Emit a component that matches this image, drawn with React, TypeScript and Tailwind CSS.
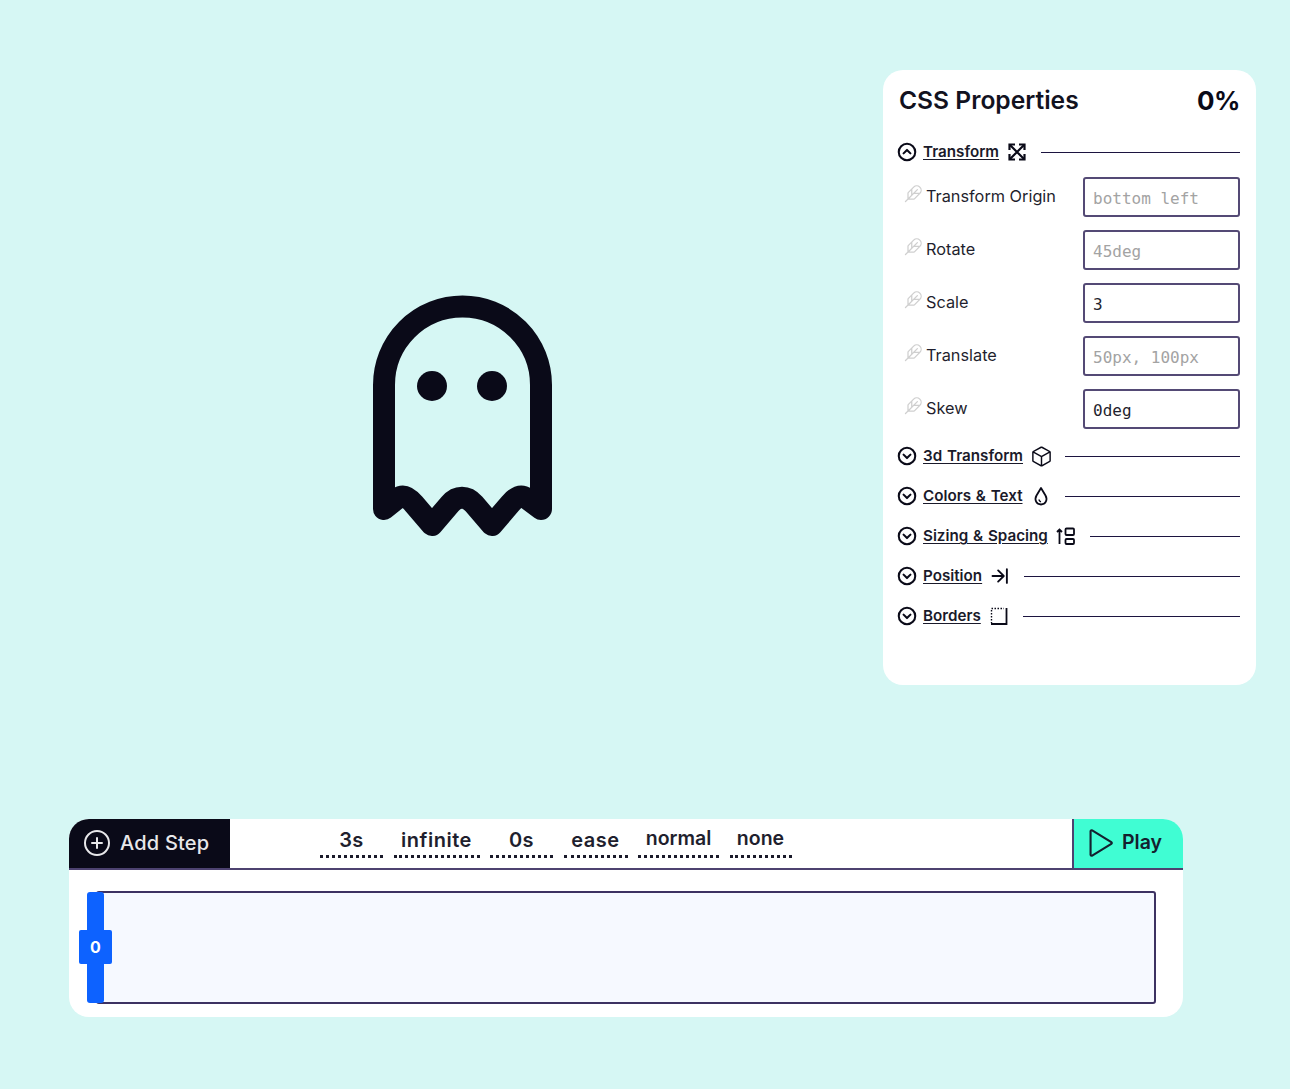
import type { ReactNode } from 'react';
import {
  PiArrowLineRightBold,
  PiCaretCircleDownBold,
  PiCaretCircleUpBold,
  PiCube,
  PiFeather,
  PiPlay,
  PiPlusCircle,
} from 'react-icons/pi';

const fields = [
  { label: 'Transform Origin', placeholder: 'bottom left' },
  { label: 'Rotate', placeholder: '45deg' },
  { label: 'Scale', value: '3' },
  { label: 'Translate', placeholder: '50px, 100px' },
  { label: 'Skew', value: '0deg' },
];

const params = [
  { text: '3s', width: 'w-[63px]', up: false },
  { text: 'infinite', width: 'w-[86px]', up: false },
  { text: '0s', width: 'w-[63px]', up: false },
  { text: 'ease', width: 'w-[64px]', up: false },
  { text: 'normal', width: 'w-[81px]', up: true },
  { text: 'none', width: 'w-[62px]', up: true },
];

function Ghost() {
  return (
    <svg width="200" height="260" viewBox="0 0 200 260" fill="none" stroke="#0a0a18" strokeWidth="22" strokeLinejoin="round">
      <path d="M22 223V99A78.5 78.5 0 0 1 179 99V223L165 212.5C158 208 153 212 148 218L130 239L112 218C105 209.500 95 209.500 88 218L70 239L52 218C47 212 42 208 35 212.500Z" />
      <circle cx="70" cy="100" r="15" fill="#0a0a18" stroke="none" />
      <circle cx="130" cy="100" r="15" fill="#0a0a18" stroke="none" />
    </svg>
  );
}

function ExpandIcon() {
  return (
    <svg width="20" height="20" viewBox="0 0 20 20" fill="none" stroke="#0a0a18" strokeWidth="2.2" className="shrink-0">
      <path d="M3 3L17 17M17 3L3 17" />
      <path d="M2.500 8V2.500H8M12 2.500H17.500V8M17.500 12V17.500H12M8 17.500H2.500V12" />
    </svg>
  );
}

function DropIcon() {
  return (
    <svg width="20" height="20" viewBox="0 0 20 20" fill="none" stroke="#0a0a18" strokeWidth="1.8" className="shrink-0">
      <path d="M10 2L14.500 9.500C17 14 14.500 18.500 10 18.500C5.500 18.500 3 14 5.500 9.500Z" strokeLinejoin="round" />
      <path d="M7.800 13.500C8.200 14.800 9 15.600 10 15.900" strokeWidth="1.3" />
    </svg>
  );
}

function SizingIcon() {
  return (
    <svg width="20" height="20" viewBox="0 0 20 20" fill="none" stroke="#0a0a18" strokeWidth="1.8">
      <path d="M3.500 18V3M1 6l2.500-2.500L6 6" />
      <rect x="9.500" y="2.500" width="8.500" height="6.500" rx="1" />
      <rect x="9.500" y="13" width="8.500" height="5" rx="1" />
    </svg>
  );
}

function BordersIcon() {
  return (
    <svg width="20" height="20" viewBox="0 0 20 20" fill="none" stroke="#0a0a18">
      <path d="M2.500 2.500H15" strokeWidth="1.4" strokeDasharray="1.5 1.5" />
      <path d="M2.500 4V17" strokeWidth="1.4" strokeDasharray="1.5 1.5" />
      <path d="M17.500 2V18H2" strokeWidth="1.8" />
    </svg>
  );
}

function SectionHeader({ title, icon, open }: { title: string; icon: ReactNode; open?: boolean }) {
  return (
    <div className="flex h-10 items-center">
      {open ? <PiCaretCircleUpBold size={22} className="text-[#0a0a18]" /> : <PiCaretCircleDownBold size={22} className="text-[#0a0a18]" />}
      <span className="ml-[5px] text-[15.2px] font-semibold leading-none text-[#1a1a2a] underline underline-offset-2 [word-spacing:1px]">
        {title}
      </span>
      <span className="ml-2 flex w-5 items-center justify-center">{icon}</span>
      <div className="ml-[14px] h-px flex-1 bg-[#1c1440]" />
    </div>
  );
}

function Field({ label, placeholder, value }: { label: string; placeholder?: string; value?: string }) {
  return (
    <div className="flex h-10 items-start">
      <PiFeather size={20} className="ml-[7px] mt-[7px] text-[#cfcfcf]" />
      <span className="ml-[3px] mt-[8px] flex-1 text-[16.3px] leading-[22px] text-[#1f1f2e]">{label}</span>
      <div
        className={`flex h-10 w-[157px] items-center rounded-[3px] border-2 border-[#544a75] bg-white pl-[8px] pt-[3px] font-['DejaVu_Sans_Mono',monospace] text-base ${
          value ? 'text-[#1f1f2e]' : 'text-[#a3a3a3]'
        }`}
      >
        {value ?? placeholder}
      </div>
    </div>
  );
}

function Timeline() {
  return (
    <div className="relative ml-[69px] mt-[134px] h-[198px] w-[1114px] overflow-hidden rounded-[20px] bg-white">
      <div className="flex h-[51px] border-b-2 border-[#4d4270]">
        <div className="flex w-[161px] items-center bg-[#0a0a18] pb-[2px] pl-[12px] text-[#e8e8ea]">
          <PiPlusCircle size={32} />
          <span className="ml-[7px] text-xl font-medium tracking-[0.2px]">Add Step</span>
        </div>
        <div className="ml-[90px] flex flex-1 items-start gap-[10.5px]">
          {params.map(p => (
            <div
              key={p.text}
              className={`flex h-[39px] items-center justify-center border-b-[3px] border-dotted border-[#1a1a2a] font-semibold text-[#1f1f2e] ${p.width} ${
                p.up ? 'pt-[3px] text-[19.5px]' : 'pt-[6px] text-xl tracking-[0.5px]'
              }`}
            >
              {p.text}
            </div>
          ))}
        </div>
        <div className="flex w-[111px] items-center border-l-2 border-[#4d4270] bg-[#40fdd3] pb-[1px] pl-[7px] text-[#14202e]">
          <PiPlay size={34} />
          <span className="ml-[7px] text-[19.5px] font-semibold">Play</span>
        </div>
      </div>
      <div className="ml-[27px] mt-[21px] h-[113px] w-[1060px] rounded-[3px] border-2 border-[#3d3262] bg-[#f6f9ff]" />
      {/* keyframe handle */}
      <div className="absolute left-[18px] top-[73px] h-[111px] w-[17px] rounded-[3px] bg-[#0d62ff]" />
      <div className="absolute left-[10px] top-[111px] flex h-[34px] w-[33px] items-center justify-center rounded-[2px] bg-[#0d62ff] text-base font-bold text-white">
        0
      </div>
    </div>
  );
}

export default function App() {
  return (
    <div className="h-[1089px] overflow-hidden bg-[#d6f7f4] pt-[70px] font-['Inter',sans-serif]">
      <div className="flex items-start">
        <div className="flex h-[615px] w-[883px] justify-center pl-[41px] pt-[216px]">
          <Ghost />
        </div>
        <div className="h-[615px] w-[373px] rounded-[20px] bg-white pl-[13px] pr-[16px] pt-[11px]">
          <div className="ml-[3px] flex items-center justify-between">
            <span className="text-[24.6px] font-semibold text-[#12121f]">CSS Properties</span>
            <span className="text-[26px] font-bold tracking-[-0.5px] text-[#0a0a18]">0%</span>
          </div>
          <div className="mt-[12px]">
            <SectionHeader open title="Transform" icon={<ExpandIcon />} />
          </div>
          <div className="mt-[5px] flex flex-col gap-[13px]">
            {fields.map(f => (
              <Field key={f.label} {...f} />
            ))}
          </div>
          <div className="mt-[7px]">
            <SectionHeader title="3d Transform" icon={<PiCube size={23} className="shrink-0 text-[#0a0a18]" />} />
            <SectionHeader title="Colors & Text" icon={<DropIcon />} />
            <SectionHeader title="Sizing & Spacing" icon={<SizingIcon />} />
            <SectionHeader title="Position" icon={<PiArrowLineRightBold size={20} className="shrink-0 text-[#0a0a18]" />} />
            <SectionHeader title="Borders" icon={<BordersIcon />} />
          </div>
        </div>
      </div>
      <Timeline />
    </div>
  );
}
